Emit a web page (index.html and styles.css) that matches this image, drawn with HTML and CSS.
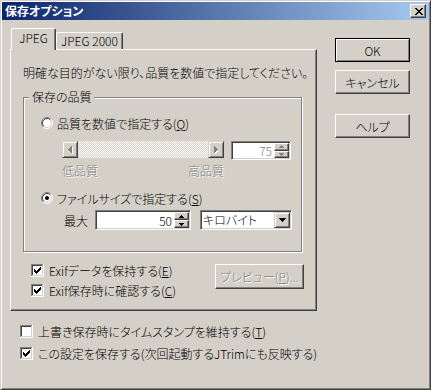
FILE: index.html
```html
<!DOCTYPE html>
<html lang="ja">
<head>
<meta charset="utf-8">
<title>保存オプション</title>
<link rel="stylesheet" href="styles.css">
</head>
<body>
<div class="window">
  <div class="titlebar">
    <span class="title">保存オプション</span>
    <span class="close-btn"><svg class="px" width="8" height="7" viewBox="0 0 8 7"><path fill="#000" d="M0 0h2v1H0zM6 0h2v1H6zM1 1h2v1H1zM5 1h2v1H5zM2 2h4v1H2zM3 3h2v1H3zM2 4h4v1H2zM1 5h2v1H1zM5 5h2v1H5zM0 6h2v1H0zM6 6h2v1H6z"/></svg></span>
  </div>
  <div class="client">
    <div class="main">
      <div class="tabs">
        <div class="tab tab-active">JPEG</div>
        <div class="tab tab-j2k">JPEG 2000</div>
      </div>
      <div class="panel">
        <p class="intro">明確な目的がない限り、品質を数値で指定してください。</p>
        <div class="group">
          <div class="group-label">保存の品質</div>
          <div class="opt opt-q">
            <svg class="radio" width="12" height="12" viewBox="0 0 12 12"><circle cx="6" cy="6" r="5" fill="#fff"/><path d="M2.11 9.89A5.5 5.5 0 0 1 9.89 2.11" fill="none" stroke="#808080"/><path d="M9.89 2.11A5.5 5.5 0 0 1 2.11 9.89" fill="none" stroke="#fff"/><path d="M2.82 9.18A4.5 4.5 0 0 1 9.18 2.82" fill="none" stroke="#404040"/><path d="M9.18 2.82A4.5 4.5 0 0 1 2.82 9.18" fill="none" stroke="#D4D0C8"/></svg>
            <span>品質を数値で指定する(<u>Q</u>)</span>
          </div>
          <div class="slider-row">
            <div class="scrollbar">
              <span class="sbtn"><svg class="px" width="5" height="8" viewBox="0 0 5 8"><path fill="#fff" transform="translate(1 1)" d="M0 3h1v1H0zM1 2h1v3H1zM2 1h1v5H2zM3 0h1v7H3z"/><path fill="#808080" d="M0 3h1v1H0zM1 2h1v3H1zM2 1h1v5H2zM3 0h1v7H3z"/></svg></span>
              <span class="track"></span>
              <span class="sbtn"><svg class="px" width="5" height="8" viewBox="0 0 5 8"><path fill="#fff" transform="translate(1 1)" d="M0 0h1v7H0zM1 1h1v5H1zM2 2h1v3H2zM3 3h1v1H3z"/><path fill="#808080" d="M0 0h1v7H0zM1 1h1v5H1zM2 2h1v3H2zM3 3h1v1H3z"/></svg></span>
            </div>
            <div class="field spin spin-q">
              <span class="spin-val disabled-plain">75</span>
              <span class="spin-btns">
                <span class="spin-b"><svg class="px" width="5" height="3" viewBox="0 0 5 3"><path fill="#808080" d="M2 0h1v1H2zM1 1h3v1H1zM0 2h5v1H0z"/></svg></span>
                <span class="spin-b"><svg class="px" width="5" height="3" viewBox="0 0 5 3"><path fill="#808080" d="M0 0h5v1H0zM1 1h3v1H1zM2 2h1v1H2z"/></svg></span>
              </span>
            </div>
          </div>
          <div class="scale disabled"><span>低品質</span><span>高品質</span></div>
          <div class="opt opt-s">
            <svg class="radio" width="12" height="12" viewBox="0 0 12 12"><circle cx="6" cy="6" r="5" fill="#fff"/><path d="M2.11 9.89A5.5 5.5 0 0 1 9.89 2.11" fill="none" stroke="#808080"/><path d="M9.89 2.11A5.5 5.5 0 0 1 2.11 9.89" fill="none" stroke="#fff"/><path d="M2.82 9.18A4.5 4.5 0 0 1 9.18 2.82" fill="none" stroke="#404040"/><path d="M9.18 2.82A4.5 4.5 0 0 1 2.82 9.18" fill="none" stroke="#D4D0C8"/><circle cx="6" cy="6" r="2" fill="#000"/></svg>
            <span>ファイルサイズで指定する(<u>S</u>)</span>
          </div>
          <div class="max-row">
            <span class="max-label">最大</span>
            <div class="field spin spin-size">
              <span class="spin-val">50</span>
              <span class="spin-btns">
                <span class="spin-b"><svg class="px" width="5" height="3" viewBox="0 0 5 3"><path fill="#000" d="M2 0h1v1H2zM1 1h3v1H1zM0 2h5v1H0z"/></svg></span>
                <span class="spin-b"><svg class="px" width="5" height="3" viewBox="0 0 5 3"><path fill="#000" d="M0 0h5v1H0zM1 1h3v1H1zM2 2h1v1H2z"/></svg></span>
              </span>
            </div>
            <div class="field combo">
              <span class="combo-val">キロバイト</span>
              <span class="combo-btn"><svg class="px" width="7" height="4" viewBox="0 0 7 4"><path fill="#000" d="M0 0h7v1H0zM1 1h5v1H1zM2 2h3v1H2zM3 3h1v1H3z"/></svg></span>
            </div>
          </div>
        </div>
        <div class="lower">
          <div class="checks">
            <div class="check">
              <svg class="px cb" width="13" height="13" viewBox="0 0 13 13"><rect width="13" height="13" fill="#fff"/><path fill="#808080" d="M0 0h12v1H1v11H0z"/><path fill="#fff" d="M12 0h1v13H0v-1h12z"/><path fill="#404040" d="M1 1h10v1H2v9H1z"/><path fill="#D4D0C8" d="M11 1h1v11H1v-1h10z"/><path fill="#000" d="M3 5h1v3H3zM4 6h1v3H4zM5 7h1v3H5zM6 6h1v3H6zM7 5h1v3H7zM8 4h1v3H8zM9 3h1v3H9z"/></svg>
              <span>Exifデータを保持する(<u>E</u>)</span>
            </div>
            <div class="check check-2">
              <svg class="px cb" width="13" height="13" viewBox="0 0 13 13"><rect width="13" height="13" fill="#fff"/><path fill="#808080" d="M0 0h12v1H1v11H0z"/><path fill="#fff" d="M12 0h1v13H0v-1h12z"/><path fill="#404040" d="M1 1h10v1H2v9H1z"/><path fill="#D4D0C8" d="M11 1h1v11H1v-1h10z"/><path fill="#000" d="M3 5h1v3H3zM4 6h1v3H4zM5 7h1v3H5zM6 6h1v3H6zM7 5h1v3H7zM8 4h1v3H8zM9 3h1v3H9z"/></svg>
              <span>Exif保存時に確認する(<u>C</u>)</span>
            </div>
          </div>
          <div class="btn btn-preview disabled">プレビュー(<u>P</u>)...</div>
        </div>
      </div>
      <div class="outer-checks">
        <div class="check">
          <svg class="px cb" width="13" height="13" viewBox="0 0 13 13"><rect width="13" height="13" fill="#fff"/><path fill="#808080" d="M0 0h12v1H1v11H0z"/><path fill="#fff" d="M12 0h1v13H0v-1h12z"/><path fill="#404040" d="M1 1h10v1H2v9H1z"/><path fill="#D4D0C8" d="M11 1h1v11H1v-1h10z"/></svg>
          <span>上書き保存時にタイムスタンプを維持する(<u>T</u>)</span>
        </div>
        <div class="check check-b2">
          <svg class="px cb" width="13" height="13" viewBox="0 0 13 13"><rect width="13" height="13" fill="#fff"/><path fill="#808080" d="M0 0h12v1H1v11H0z"/><path fill="#fff" d="M12 0h1v13H0v-1h12z"/><path fill="#404040" d="M1 1h10v1H2v9H1z"/><path fill="#D4D0C8" d="M11 1h1v11H1v-1h10z"/><path fill="#000" d="M3 5h1v3H3zM4 6h1v3H4zM5 7h1v3H5zM6 6h1v3H6zM7 5h1v3H7zM8 4h1v3H8zM9 3h1v3H9z"/></svg>
          <span>この設定を保存する(次回起動するJTrimにも反映する)</span>
        </div>
      </div>
    </div>
    <div class="side">
      <div class="btn btn-default">OK</div>
      <div class="btn btn-cancel">キャンセル</div>
      <div class="btn btn-help">ヘルプ</div>
    </div>
  </div>
</div>
</body>
</html>
```

FILE: styles.css
```css
* { box-sizing: border-box; }

html, body {
  margin: 0;
  padding: 0;
  background: #D4D0C8;
}

body {
  width: 431px;
  height: 390px;
  overflow: hidden;
  font-family: "Noto Sans CJK JP", "Noto Sans", sans-serif;
  font-size: 12px;
  font-weight: 300;
  line-height: 15px;
  color: #000;
  font-feature-settings: "palt";
}

.px { shape-rendering: crispEdges; display: block; flex: none; }

.window {
  width: 431px;
  height: 390px;
  border: 1px solid;
  border-color: #D4D0C8 #404040 #404040 #D4D0C8;
  box-shadow: inset 1px 1px #fff, inset -1px -1px #808080;
  padding: 1px;
  background: #D4D0C8;
  display: flex;
  flex-direction: column;
}

.titlebar {
  height: 18px;
  flex: none;
  background: linear-gradient(to right, #0A246A, #A6CAF0);
  display: flex;
  align-items: center;
  justify-content: space-between;
  padding: 0 3px 0 3px;
}

.title {
  color: #fff;
  font-weight: bold;
  font-size: 12px;
  line-height: 18px;
}

.close-btn {
  width: 16px;
  height: 14px;
  background: #D4D0C8;
  border: 1px solid;
  border-color: #fff #404040 #404040 #fff;
  box-shadow: inset -1px -1px #808080;
  display: flex;
  align-items: center;
  justify-content: center;
  padding-left: 1px;
}

.client {
  flex: 1;
  display: flex;
  align-items: flex-start;
}

.main {
  width: 307px;
  margin: 8px 0 0 8px;
}

.side {
  width: 75px;
  margin: 18px 0 0 18px;
  display: flex;
  flex-direction: column;
}

/* tabs */
.tabs {
  height: 21px;
  display: flex;
  align-items: flex-start;
  padding-left: 1px;
}

.tab {
  height: 17px;
  margin-top: 4px;
  background: #D4D0C8;
  border-top: 1px solid #fff;
  border-left: 1px solid #fff;
  border-right: 1px solid #404040;
  border-radius: 2px 2px 0 0;
  box-shadow: inset -1px 0 #808080;
  font-size: 12px;
  line-height: 15px;
  text-align: center;
}

.tab-active {
  width: 45px;
  height: 22px;
  margin-top: 0;
  margin-bottom: -1px;
  padding-top: 1px;
  z-index: 1;
}

.tab-j2k {
  width: 67px;
}

/* panel */
.panel {
  border: 1px solid;
  border-color: #fff #404040 #404040 #fff;
  box-shadow: inset -1px -1px #808080;
  padding: 0 0 12px 12px;
}

.intro {
  margin: 15px 0 0 0;
  line-height: 15px;
  white-space: nowrap;
}

.group {
  margin-top: 17px;
  width: 279px;
  height: 155px;
  border: 1px solid #808080;
  box-shadow: inset 1px 1px #fff, 1px 1px #fff;
}

.group-label {
  width: max-content;
  margin: -8px 0 0 5px;
  padding: 0 2px 0 3px;
  background: #D4D0C8;
  line-height: 14px;
}

.opt {
  display: flex;
  align-items: center;
  height: 14px;
  white-space: nowrap;
}

.radio { flex: none; display: block; margin-right: 4px; }

.opt-q { margin: 12px 0 0 17px; }
.opt-s { margin: 13px 0 0 17px; }

.slider-row {
  display: flex;
  align-items: flex-start;
  height: 19px;
  margin: 11px 0 0 38px;
  gap: 7px;
}

.scrollbar {
  width: 162px;
  height: 17px;
  display: flex;
}

.sbtn {
  width: 16px;
  height: 17px;
  flex: none;
  background: #D4D0C8;
  border: 1px solid;
  border-color: #D4D0C8 #404040 #404040 #D4D0C8;
  box-shadow: inset 1px 1px #fff, inset -1px -1px #808080;
  display: flex;
  align-items: center;
  justify-content: center;
}

.track {
  flex: 1;
  background: repeating-conic-gradient(#fff 0 25%, #D4D0C8 0 50%) 0 0 / 2px 2px;
}

.field {
  display: flex;
  background: #fff;
  border: 1px solid;
  border-color: #808080 #fff #fff #808080;
  box-shadow: inset 1px 1px #404040, inset -1px -1px #D4D0C8;
  padding: 1px;
}

.spin-q { width: 60px; height: 19px; }
.spin-size { width: 96px; height: 20px; }

.spin-val {
  flex: 1;
  text-align: right;
  padding-right: 2px;
  line-height: 15px;
  align-self: center;
}

.disabled-plain { color: #808080; }

.spin-btns {
  width: 15px;
  flex: none;
  display: flex;
  flex-direction: column;
}

.spin-b {
  flex: 1;
  background: #D4D0C8;
  border: 1px solid;
  border-color: #fff #404040 #404040 #fff;
  box-shadow: inset -1px -1px #808080;
  display: flex;
  align-items: center;
  justify-content: center;
}

.scale {
  display: flex;
  justify-content: space-between;
  width: 162px;
  height: 14px;
  line-height: 14px;
  margin: 4px 0 0 38px;
}

.disabled {
  color: #808080;
  text-shadow: 1px 1px 0 #fff;
}

.max-row {
  display: flex;
  align-items: center;
  height: 20px;
  margin: 5px 0 0 40px;
}

.max-label { width: 31px; flex: none; }

.combo {
  width: 92px;
  height: 20px;
  margin-left: 9px;
}

.combo-val {
  flex: 1;
  padding-left: 1px;
  line-height: 16px;
  white-space: nowrap;
}

.combo-btn {
  width: 16px;
  flex: none;
  background: #D4D0C8;
  border: 1px solid;
  border-color: #D4D0C8 #404040 #404040 #D4D0C8;
  box-shadow: inset 1px 1px #fff, inset -1px -1px #808080;
  display: flex;
  align-items: center;
  justify-content: center;
}

/* lower area */
.lower {
  display: flex;
  justify-content: space-between;
  align-items: flex-start;
  margin-top: 11px;
  padding: 0 12px 0 8px;
}

.check {
  display: flex;
  align-items: center;
  height: 15px;
  gap: 5px;
  white-space: nowrap;
}

.check-2 { margin-top: 5px; }

.outer-checks {
  margin: 13px 0 0 10px;
}

.check-b2 { margin-top: 7px; }

/* buttons */
.btn {
  height: 24px;
  display: flex;
  align-items: center;
  justify-content: center;
  background: #D4D0C8;
  border: 1px solid;
  border-color: #fff #404040 #404040 #fff;
  box-shadow: inset -1px -1px #808080;
  white-space: nowrap;
}

.btn-default {
  border-color: #000;
  box-shadow: inset 1px 1px #fff, inset -1px -1px #808080;
}

.btn-cancel { margin-top: 8px; }
.btn-help { margin-top: 20px; }

.btn-preview {
  width: 89px;
  height: 25px;
  margin-top: 1px;
}
```
